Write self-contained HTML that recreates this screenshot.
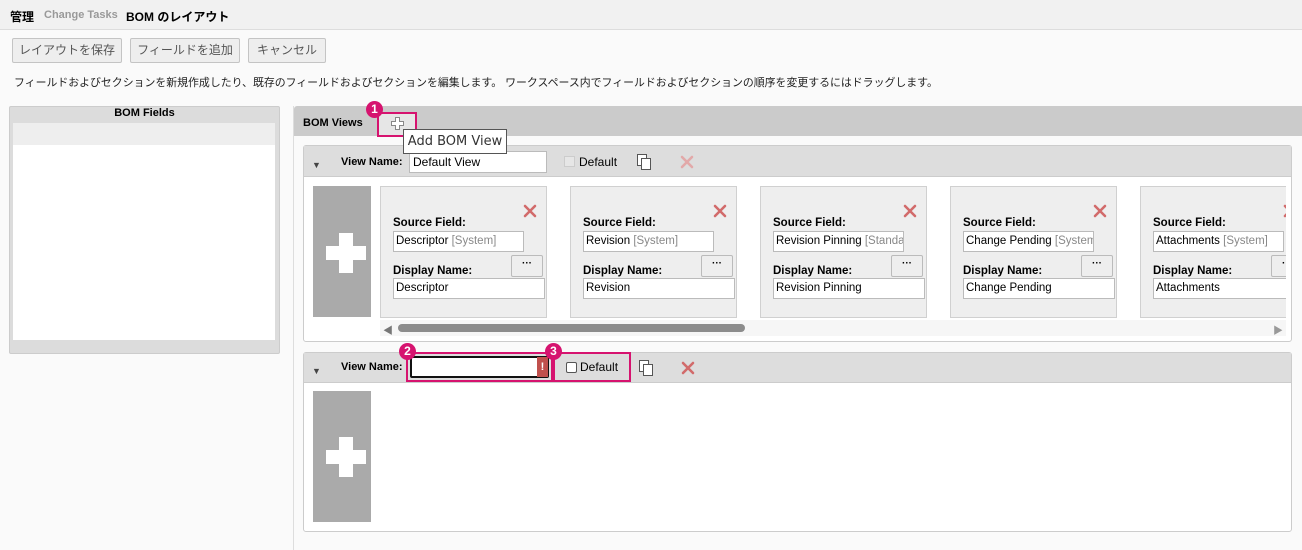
<!DOCTYPE html>
<html><head><meta charset="utf-8"><style>
*{box-sizing:border-box;margin:0;padding:0}
body{width:1302px;height:550px;overflow:hidden;background:#fafafa;font-family:"Liberation Sans","Noto Sans CJK JP",sans-serif;font-size:12px;color:#000;position:relative}
.a{position:absolute}
.btn{position:absolute;top:38px;height:25px;border:1px solid #c4c4c4;background:#eee;border-radius:2px;color:#555;font-size:12px;text-align:center;line-height:22px}
.card{position:absolute;top:0;width:167px;height:132px;background:#eee;border:1px solid #d0d0d0}
.lbl{position:absolute;left:12px;font-weight:bold;font-size:11.5px}
.inp{position:absolute;left:12px;background:#fff;border:1px solid #bbb;height:21px;font-size:11.5px;line-height:19px;padding-left:2px;white-space:nowrap;overflow:hidden}
.sys{color:#888}
.xs{position:absolute;width:14px;height:14px}
.dots{position:absolute;left:130px;top:68px;width:32px;height:22px;border:1px solid #bbb;background:#eee;border-radius:2px;text-align:center;font-size:10px;line-height:16px;font-weight:bold}
.badge{position:absolute;width:17px;height:17px;border-radius:50%;background:#d6136f;color:#fff;font-size:12px;font-weight:bold;text-align:center;line-height:17px;z-index:5}
.mag{position:absolute;border:2px solid #d6136f}
</style></head><body>
<svg width="0" height="0" style="position:absolute"><defs><symbol id="x" viewBox="0 0 14 14"><path d="M2 2L12 12M12 2L2 12" stroke="currentColor" stroke-width="2.6" stroke-linecap="round"/></symbol></defs></svg>
<div class="a" style="left:0;top:0;width:1302px;height:30px;background:#f1f1f1;border-bottom:1px solid #ddd"></div>
<div class="a" style="left:10px;top:8px;font-size:12px;font-weight:bold">管理</div>
<div class="a" style="left:44px;top:9px;font-size:11px;font-weight:bold;color:#999">Change Tasks</div>
<div class="a" style="left:126px;top:8px;font-size:12px;font-weight:bold">BOM のレイアウト</div>
<div class="btn" style="left:12px;width:110px">レイアウトを保存</div>
<div class="btn" style="left:130px;width:110px">フィールドを追加</div>
<div class="btn" style="left:248px;width:78px">キャンセル</div>
<div class="a" style="left:14px;top:74px;font-size:10.9px;color:#222;white-space:nowrap">フィールドおよびセクションを新規作成したり、既存のフィールドおよびセクションを編集します。 ワークスペース内でフィールドおよびセクションの順序を変更するにはドラッグします。</div>

<div class="a" style="left:9px;top:106px;width:271px;height:248px;background:#dcdcdc;border:1px solid #ccc;border-radius:2px"></div>
<div class="a" style="left:9px;top:106px;width:271px;text-align:center;font-weight:bold;font-size:11px;line-height:14px">BOM Fields</div>
<div class="a" style="left:13px;top:123px;width:262px;height:22px;background:#eee"></div>
<div class="a" style="left:13px;top:145px;width:262px;height:195px;background:#fff"></div>

<div class="a" style="left:293px;top:106px;width:1px;height:444px;background:#ddd"></div>
<div class="a" style="left:294px;top:106px;width:1008px;height:30px;background:#cbcbcb;border-radius:3px 0 0 0"></div>
<div class="a" style="left:303px;top:117px;font-weight:bold;font-size:11px">BOM Views</div>
<div class="a" style="left:379px;top:113px;width:37px;height:23px;background:#e6e6e6"></div>
<div class="mag" style="left:377px;top:112px;width:40px;height:25px"></div>
<svg class="a" style="left:390px;top:116px" width="15" height="15" viewBox="0 0 15 15"><path d="M5.5 1.5h4v4h4v4h-4v4h-4v-4h-4v-4h4z" fill="#fff" stroke="#888" stroke-width="1"/></svg>
<div class="badge" style="left:366px;top:101px">1</div>
<div class="a" style="left:403px;top:129px;width:104px;height:25px;background:#fff;border:1px solid #555;font-size:13px;line-height:23px;text-align:center;color:#333;font-family:'DejaVu Sans','Liberation Sans',sans-serif;z-index:10">Add BOM View</div>

<!-- section 1 -->
<div class="a" style="left:303px;top:145px;width:989px;height:197px;background:#fff;border:1px solid #ccc;border-radius:3px"></div>
<div class="a" style="left:304px;top:146px;width:987px;height:31px;background:#ddd;border-bottom:1px solid #ccc"></div>
<div class="a" style="left:312px;top:160px;font-size:9px;color:#444">▼</div>
<div class="a" style="left:341px;top:156px;font-weight:bold;font-size:11px">View Name:</div>
<div class="a" style="left:409px;top:151px;width:138px;height:22px;background:#fff;border:1px solid #bbb;font-size:12px;line-height:20px;padding-left:3px">Default View</div>
<div class="a" style="left:564px;top:156px;width:11px;height:11px;background:#e6e6e6;border:1px solid #ccc"></div>
<div class="a" style="left:579px;top:155px;font-size:12px">Default</div>
<div class="a" style="left:637px;top:154px;width:10px;height:12px;border:1px solid #555;background:#fff"></div>
<div class="a" style="left:641px;top:158px;width:10px;height:12px;border:1px solid #555;background:#fff"></div>
<svg class="xs" style="left:680px;top:155px;color:#e2a9a9"><use href="#x"/></svg>
<div class="a" style="left:313px;top:186px;width:58px;height:131px;background:#aaa"></div>
<div class="a" style="left:326px;top:233px;width:40px;height:40px"><div class="a" style="left:13px;top:0;width:14px;height:40px;background:#fff"></div><div class="a" style="left:0;top:13px;width:40px;height:14px;background:#fff"></div></div>

<div class="a" style="left:380px;top:186px;width:906px;height:133px;overflow:hidden">
<div class="card" style="left:0"><svg class="xs" style="left:142px;top:17px;color:#d26b6b"><use href="#x"/></svg><div class="lbl" style="top:30px">Source Field:</div><div class="inp" style="top:44px;width:131px">Descriptor <span class="sys">[System]</span></div><div class="dots">···</div><div class="lbl" style="top:78px">Display Name:</div><div class="inp" style="top:91px;width:152px">Descriptor</div></div>
<div class="card" style="left:190px"><svg class="xs" style="left:142px;top:17px;color:#d26b6b"><use href="#x"/></svg><div class="lbl" style="top:30px">Source Field:</div><div class="inp" style="top:44px;width:131px">Revision <span class="sys">[System]</span></div><div class="dots">···</div><div class="lbl" style="top:78px">Display Name:</div><div class="inp" style="top:91px;width:152px">Revision</div></div>
<div class="card" style="left:380px"><svg class="xs" style="left:142px;top:17px;color:#d26b6b"><use href="#x"/></svg><div class="lbl" style="top:30px">Source Field:</div><div class="inp" style="top:44px;width:131px">Revision Pinning <span class="sys">[Standard]</span></div><div class="dots">···</div><div class="lbl" style="top:78px">Display Name:</div><div class="inp" style="top:91px;width:152px">Revision Pinning</div></div>
<div class="card" style="left:570px"><svg class="xs" style="left:142px;top:17px;color:#d26b6b"><use href="#x"/></svg><div class="lbl" style="top:30px">Source Field:</div><div class="inp" style="top:44px;width:131px">Change Pending <span class="sys">[System]</span></div><div class="dots">···</div><div class="lbl" style="top:78px">Display Name:</div><div class="inp" style="top:91px;width:152px">Change Pending</div></div>
<div class="card" style="left:760px"><svg class="xs" style="left:142px;top:17px;color:#d26b6b"><use href="#x"/></svg><div class="lbl" style="top:30px">Source Field:</div><div class="inp" style="top:44px;width:131px">Attachments <span class="sys">[System]</span></div><div class="dots">···</div><div class="lbl" style="top:78px">Display Name:</div><div class="inp" style="top:91px;width:152px">Attachments</div></div>
</div>
<div class="a" style="left:380px;top:320px;width:906px;height:16px;background:#f6f6f6"></div>
<div class="a" style="left:383px;top:322px;font-size:10px;color:#777">◀</div>
<div class="a" style="left:398px;top:324px;width:347px;height:8px;background:#8c8c8c;border-radius:4px"></div>
<div class="a" style="left:1273px;top:322px;font-size:10px;color:#999">▶</div>

<!-- section 2 -->
<div class="a" style="left:303px;top:352px;width:989px;height:180px;background:#fff;border:1px solid #ccc;border-radius:3px"></div>
<div class="a" style="left:304px;top:353px;width:987px;height:30px;background:#ddd;border-bottom:1px solid #ccc"></div>
<div class="a" style="left:312px;top:366px;font-size:9px;color:#444">▼</div>
<div class="a" style="left:341px;top:361px;font-weight:bold;font-size:11px">View Name:</div>
<div class="a" style="left:410px;top:356px;width:139px;height:22px;background:#fff;border:2px solid #111;border-radius:2px"></div>
<div class="a" style="left:537px;top:357px;width:11px;height:20px;background:#c0504d;color:#fff;font-size:11px;font-weight:bold;text-align:center;line-height:20px">!</div>
<div class="mag" style="left:406px;top:352px;width:147px;height:30px"></div>
<div class="badge" style="left:399px;top:343px">2</div>
<div class="mag" style="left:553px;top:352px;width:78px;height:30px"></div>
<div class="badge" style="left:545px;top:343px">3</div>
<div class="a" style="left:566px;top:362px;width:11px;height:11px;background:#fff;border:1px solid #555;border-radius:2px"></div>
<div class="a" style="left:580px;top:360px;font-size:12px">Default</div>
<div class="a" style="left:639px;top:360px;width:10px;height:12px;border:1px solid #555;background:#fff"></div>
<div class="a" style="left:643px;top:364px;width:10px;height:12px;border:1px solid #555;background:#fff"></div>
<svg class="xs" style="left:681px;top:361px;color:#d26b6b"><use href="#x"/></svg>
<div class="a" style="left:313px;top:391px;width:58px;height:131px;background:#aaa"></div>
<div class="a" style="left:326px;top:437px;width:40px;height:40px"><div class="a" style="left:13px;top:0;width:14px;height:40px;background:#fff"></div><div class="a" style="left:0;top:13px;width:40px;height:14px;background:#fff"></div></div>
</body></html>
